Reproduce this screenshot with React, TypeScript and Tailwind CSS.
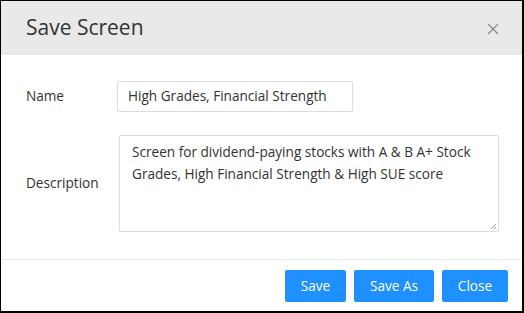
import React from "react";

export default function App() {
  const font = { fontFamily: '"Open Sans", "Noto Sans", sans-serif' };
  return (
    <div
      className="w-[524px] h-[313px] bg-white border-l border-t border-r-2 border-b-2 border-black flex flex-col text-[#333]"
      style={font}
    >
      <div className="h-[54px] shrink-0 bg-[#e9e9e9] flex items-center justify-between pl-[25px] pr-[23px]">
        <span className="text-[21px] text-[#333]">Save Screen</span>
        <svg width="12" height="12" viewBox="0 0 12 12" className="mt-[1px]">
          <path d="M1 1 L11 11 M11 1 L1 11" stroke="#888" strokeWidth="1.2" fill="none" />
        </svg>
      </div>
      <div className="flex flex-col pt-[26px] pb-[27px] pl-[25px] border-b border-[#eeeeee]">
        <div className="flex items-center h-[31px]">
          <span className="w-[91px] text-[13.6px]">Name</span>
          <div className="w-[236px] h-[31px] border border-[#dddddd] rounded-[2px] flex items-center pl-[10px] text-[13.6px] text-[#333]">
            High Grades, Financial Strength
          </div>
        </div>
        <div className="flex items-center mt-[23px]">
          <span className="w-[93px] text-[13.6px]">Description</span>
          <div className="relative w-[380px] h-[97px] border border-[#dddddd] rounded-[2px] pl-[12px] pr-[10px] pt-[5px] text-[13.6px] leading-[22px] text-[#333]">
            Screen for dividend-paying stocks with A &amp; B A+ Stock Grades, High Financial Strength &amp; High SUE score
            <svg width="7" height="7" viewBox="0 0 7 7" className="absolute right-[1px] bottom-[1px]">
              <path d="M6 1 L1 6 M6 4 L4 6" stroke="#999" strokeWidth="1" fill="none" />
            </svg>
          </div>
        </div>
      </div>
      <div className="flex justify-end gap-[8px] pt-[10px] pr-[14px]">
        <button className="w-[61px] h-[32px] bg-[#1e90ff] text-white text-[13.6px] rounded-[2px]">Save</button>
        <button className="w-[80px] h-[32px] bg-[#1e90ff] text-white text-[13.6px] rounded-[2px]">Save As</button>
        <button className="w-[66px] h-[32px] bg-[#1e90ff] text-white text-[13.6px] rounded-[2px]">Close</button>
      </div>
    </div>
  );
}
